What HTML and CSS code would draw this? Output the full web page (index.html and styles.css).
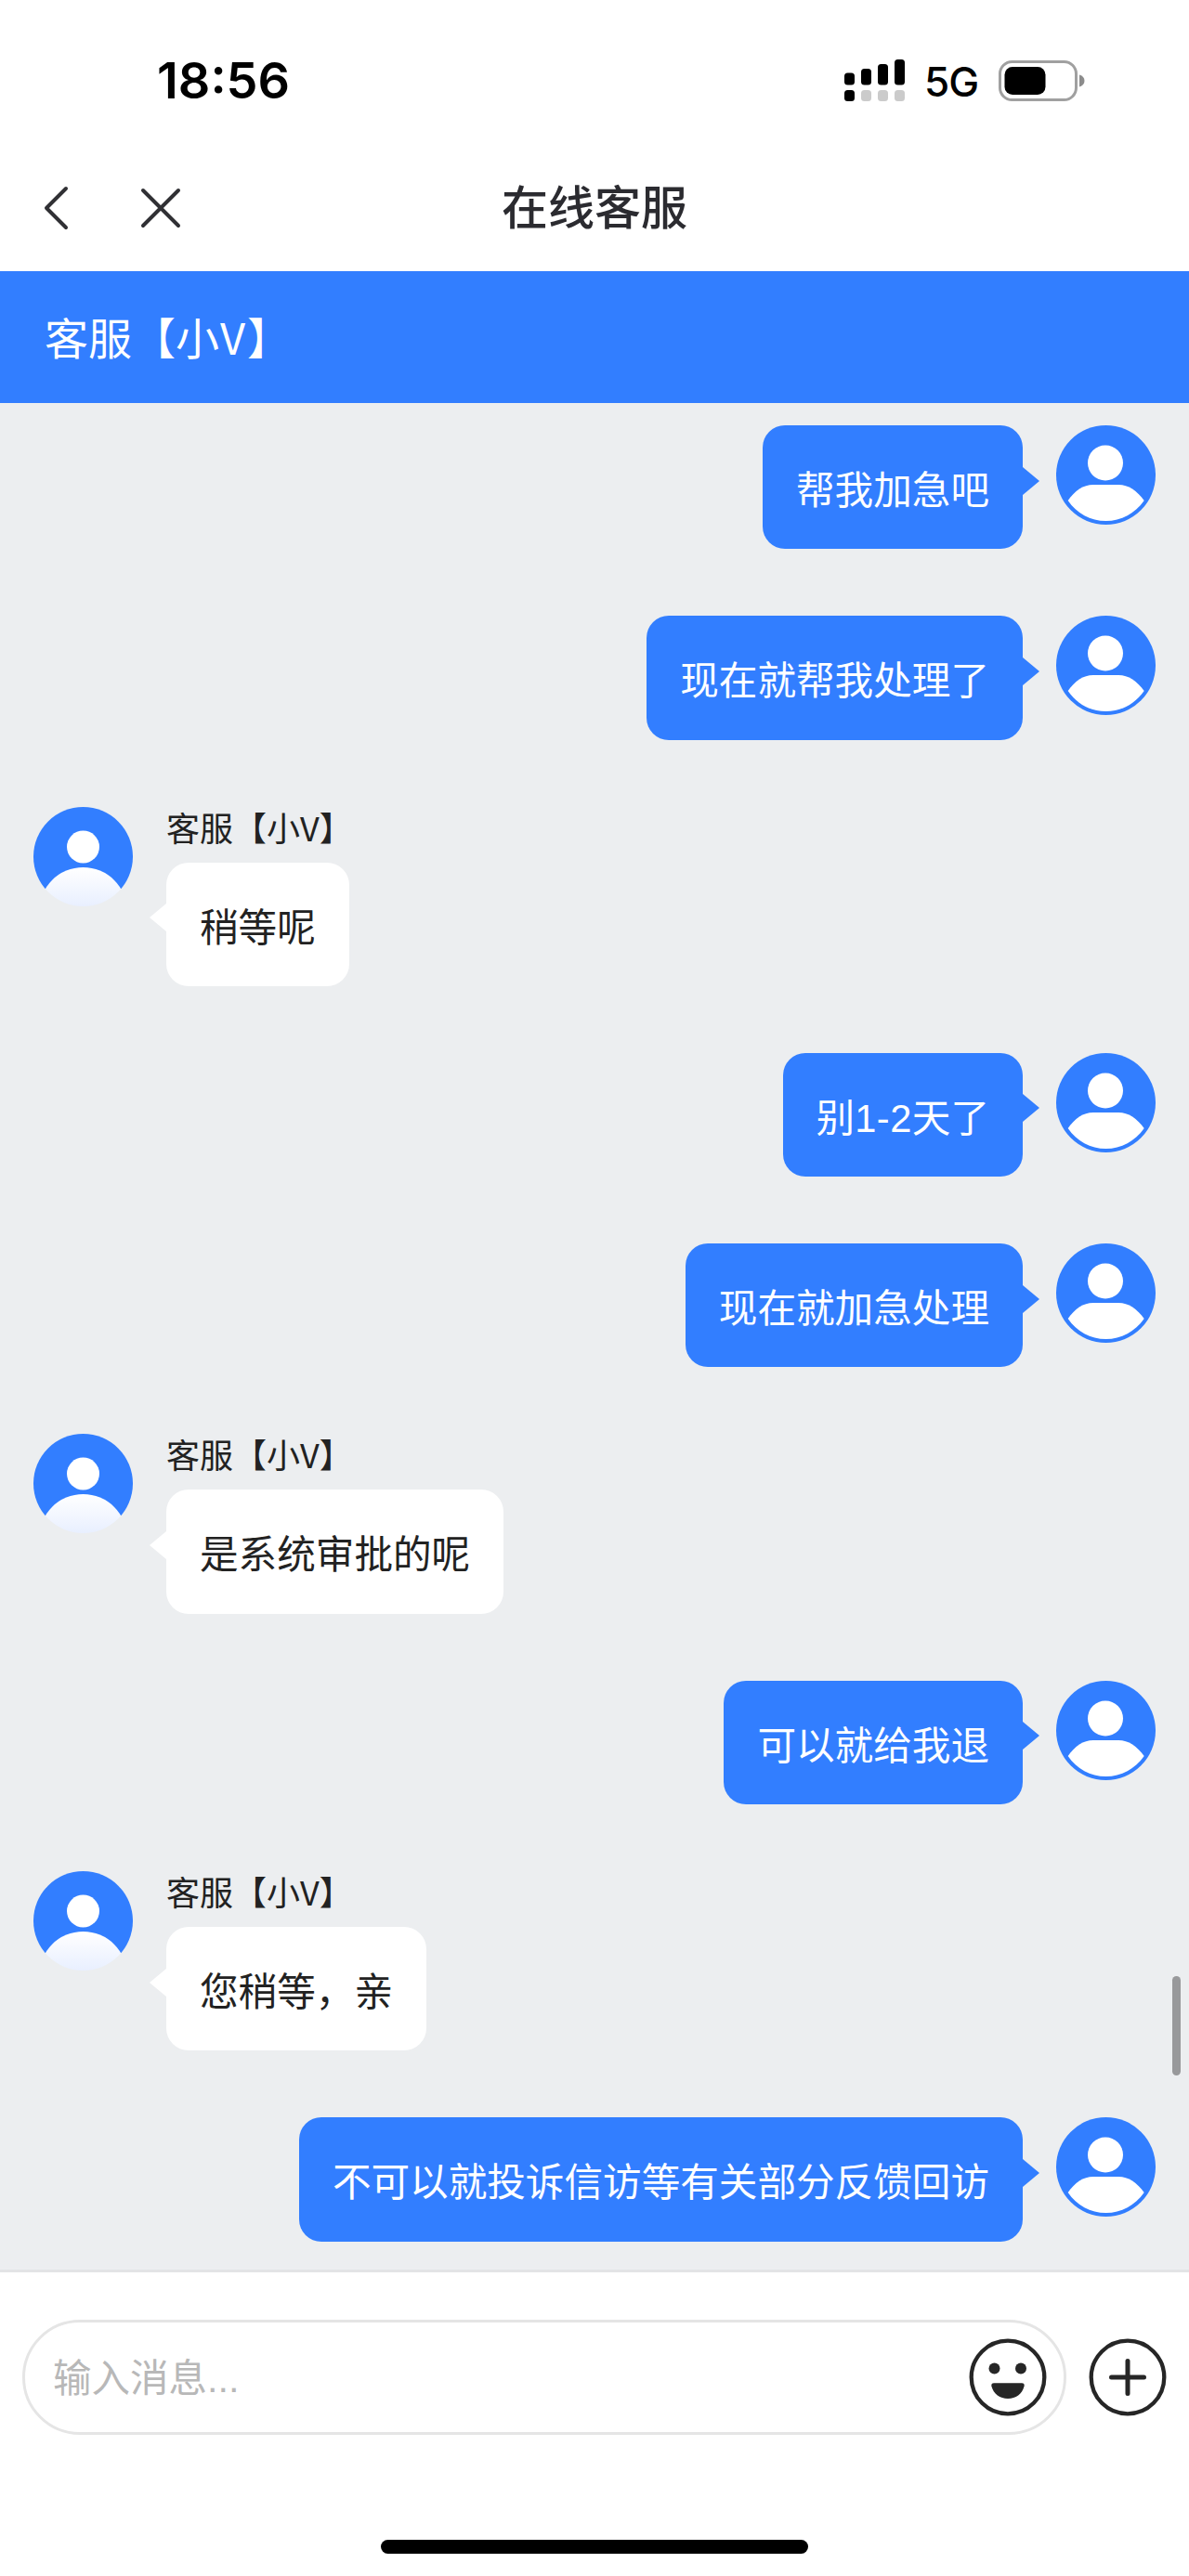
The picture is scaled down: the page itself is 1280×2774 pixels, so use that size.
FILE: index.html
```html
<!DOCTYPE html>
<html lang="zh-CN">
<head>
    <meta charset="UTF-8">
    <meta name="viewport" content="width=device-width, initial-scale=1.0">
    <title>在线客服</title>
    <link rel="stylesheet" href="styles.css">
</head>
<body>
    <!-- Shared icons -->
    <svg class="icon-defs" width="0" height="0">
        <defs>
            <linearGradient id="bodyFade" x1="0" y1="0" x2="0" y2="1">
                <stop offset="0" stop-color="#ffffff"/>
                <stop offset="0.45" stop-color="#e8efff"/>
            </linearGradient>
            <clipPath id="avatarClip"><circle cx="53.5" cy="53.5" r="53.5"/></clipPath>
        </defs>
        <symbol id="user-avatar" viewBox="0 0 107 107">
            <circle cx="53.5" cy="53.5" r="53.5" fill="#327eff"/>
            <circle cx="53" cy="40.5" r="19" fill="#fff"/>
            <path d="M12.7 81C20 70.5 29 64 40 64H67C78 64 87 70.5 94.7 81C85 95 70 103 53.5 103S22 95 12.7 81Z" fill="#fff"/>
        </symbol>
        <symbol id="agent-avatar" viewBox="0 0 107 107">
            <g clip-path="url(#avatarClip)">
                <rect width="107" height="88" fill="#327eff"/>
                <circle cx="53.5" cy="43" r="17.5" fill="#fff"/>
                <circle cx="53.5" cy="112.5" r="47.5" fill="url(#bodyFade)"/>
            </g>
        </symbol>
    </svg>

    <div class="page">
        <div class="status-bar">
            <span class="time">18:56</span>
            <div class="status-right">
                <svg class="signal" width="66" height="46" viewBox="0 0 66 46">
                    <rect x="0" y="14.5" width="11" height="13" rx="3.5"/>
                    <rect x="18" y="10" width="11" height="17.5" rx="3.5"/>
                    <rect x="36" y="5" width="11" height="22.5" rx="3.5"/>
                    <rect x="54" y="0" width="11" height="27.5" rx="3.5"/>
                    <rect x="0" y="33" width="11" height="12" rx="3.5"/>
                    <g fill="#cbcbcb">
                        <rect x="18" y="33" width="11" height="12" rx="3.5"/>
                        <rect x="36" y="33" width="11" height="12" rx="3.5"/>
                        <rect x="54" y="33" width="11" height="12" rx="3.5"/>
                    </g>
                </svg>
                <span class="network">5G</span>
                <svg class="battery" width="94" height="44" viewBox="0 0 94 44">
                    <rect x="1.5" y="1.5" width="82" height="41" rx="13" fill="none" stroke="#a0a0a0" stroke-width="3"/>
                    <rect x="6.5" y="7" width="44" height="30" rx="8.5"/>
                    <path d="M87 15.5C90.5 16.5 92.5 19 92.5 22S90.5 27.5 87 28.5Z" fill="#8c8c8c"/>
                </svg>
            </div>
        </div>

        <div class="nav-bar">
            <svg width="28" height="48" viewBox="0 0 28 48" class="nav-icon">
                <path d="M24 3L3 24L24 45"/>
            </svg>
            <svg width="46" height="46" viewBox="0 0 46 46" class="nav-icon close">
                <path d="M4 4L42 42M42 4L4 42"/>
            </svg>
            <h1>在线客服</h1>
        </div>

        <div class="chat-header">客服【小<span class="letter">V</span>】</div>

        <div class="chat">
            <div class="message user">
                <div class="bubble">帮我加急吧</div>
                <svg class="avatar"><use href="#user-avatar"/></svg>
            </div>
            <div class="message user">
                <div class="bubble">现在就帮我处理了</div>
                <svg class="avatar"><use href="#user-avatar"/></svg>
            </div>
            <div class="message agent">
                <svg class="avatar"><use href="#agent-avatar"/></svg>
                <div class="content">
                    <div class="name">客服【小V】</div>
                    <div class="bubble">稍等呢</div>
                </div>
            </div>
            <div class="message user">
                <div class="bubble">别<span class="num">1-2</span>天了</div>
                <svg class="avatar"><use href="#user-avatar"/></svg>
            </div>
            <div class="message user">
                <div class="bubble">现在就加急处理</div>
                <svg class="avatar"><use href="#user-avatar"/></svg>
            </div>
            <div class="message agent">
                <svg class="avatar"><use href="#agent-avatar"/></svg>
                <div class="content">
                    <div class="name">客服【小V】</div>
                    <div class="bubble">是系统审批的呢</div>
                </div>
            </div>
            <div class="message user">
                <div class="bubble">可以就给我退</div>
                <svg class="avatar"><use href="#user-avatar"/></svg>
            </div>
            <div class="message agent">
                <svg class="avatar"><use href="#agent-avatar"/></svg>
                <div class="content">
                    <div class="name">客服【小V】</div>
                    <div class="bubble">您稍等，亲</div>
                </div>
            </div>
            <div class="message user">
                <div class="bubble">不可以就投诉信访等有关部分反馈回访</div>
                <svg class="avatar"><use href="#user-avatar"/></svg>
            </div>
            <div class="scrollbar"></div>
        </div>

        <div class="footer">
            <div class="input-row">
                <div class="input-box">
                    <span class="placeholder">输入消息...</span>
                    <svg width="84" height="84" viewBox="0 0 84 84">
                        <circle cx="42" cy="42" r="39.3" fill="none" stroke="#262626" stroke-width="4.3"/>
                        <circle cx="27.5" cy="32.5" r="6" fill="#262626"/>
                        <circle cx="56" cy="32.5" r="6" fill="#262626"/>
                        <path d="M27 48.3H57C59 48.3 60 49.5 59.6 51.5C57.5 60 50.5 65 42 65S26.5 60 24.4 51.5C24 49.5 25 48.3 27 48.3Z" fill="#262626"/>
                    </svg>
                </div>
                <svg width="84" height="84" viewBox="0 0 84 84">
                    <g fill="none" stroke="#262626">
                        <circle cx="42" cy="42" r="39.3" stroke-width="4.3"/>
                        <path d="M42 24.500V59.500M24.500 42H59.500" stroke-width="5" stroke-linecap="round"/>
                    </g>
                </svg>
            </div>
            <div class="home-indicator"></div>
        </div>
    </div>
</body>
</html>
```
FILE: styles.css
```css
* { box-sizing: border-box; margin: 0; padding: 0; }
body {
    font-family: "Noto Sans CJK SC", sans-serif;
    background-color: #fff;
    color: #222;
}
svg { display: block; flex-shrink: 0; }
.icon-defs { position: absolute; }
.page {
    width: 1280px;
    height: 2774px;
    display: flex;
    flex-direction: column;
    overflow: hidden;
}

/* Status bar */
.status-bar {
    height: 157px;
    padding: 16px 111px 0 169px;
    display: flex;
    justify-content: space-between;
    align-items: center;
    font-family: Inter, sans-serif;
    color: #000;
}
.time {
    font-size: 54px;
    font-weight: 600;
    letter-spacing: 0;
}
.status-right { display: flex; align-items: center; }
.network {
    margin: 3px 0 0 20px;
    width: 80px;
    font-size: 44px;
    font-weight: 500;
    letter-spacing: -1px;
}

/* Navigation */
.nav-bar {
    height: 135px;
    padding: 0 0 2px 47px;
    display: flex;
    align-items: center;
}
.nav-icon {
    fill: none;
    stroke: #303034;
    stroke-width: 4;
    stroke-linecap: round;
    stroke-linejoin: round;
}
.close { margin-left: 75px; }
.nav-bar h1 {
    margin-left: 344px;
    padding-bottom: 8px;
    font-size: 50px;
    font-weight: 500;
    color: #2b2b30;
}
.chat-header {
    height: 142px;
    padding-left: 48px;
    line-height: 139px;
    font-size: 47px;
    background-color: #327eff;
    color: #fff;
}
.letter { margin: 0 2px 0 1px; }

/* Messages */
.chat {
    position: relative;
    height: 2010px;
    padding: 24px 36px 0;
    display: flex;
    flex-direction: column;
    gap: 72px;
    background-color: #eceef0;
}
.message {
    display: flex;
    align-items: flex-start;
    gap: 36px;
}
.user { justify-content: flex-end; }
.avatar { width: 107px; height: 107px; }
.content {
    display: flex;
    flex-direction: column;
    align-items: flex-start;
}
.name {
    height: 60px;
    line-height: 43px;
    font-size: 36px;
}
.bubble {
    position: relative;
    height: 133.3px;
    padding: 0 36px;
    border-radius: 24px;
    line-height: 134px;
    font-size: 41.6px;
    white-space: nowrap;
    background-color: #fff;
}
.user .bubble { background-color: #327eff; color: #fff; }
/* Bubble arrows */
.bubble::after {
    content: "";
    position: absolute;
    top: 44.5px;
    border: 15px solid transparent;
}
.user .bubble::after {
    left: 100%;
    border-width: 15px 0 15px 18px;
    border-left-color: #327eff;
}
.agent .bubble::after {
    right: 100%;
    border-width: 15px 18px 15px 0;
    border-right-color: #fff;
}
.num {
    font-family: "Liberation Sans", sans-serif;
    letter-spacing: 0.5px;
}
.scrollbar {
    position: absolute;
    right: 9px;
    top: 1694px;
    width: 9px;
    height: 107px;
    border-radius: 5px;
    background-color: #98999b;
}

/* Input area */
.footer {
    height: 330px;
    padding: 51px 24px 0;
    border-top: 3px solid #e3e4e6;
    display: flex;
    flex-direction: column;
    align-items: center;
}
.input-row {
    width: 100%;
    display: flex;
    align-items: center;
    gap: 24px;
}
.input-box {
    flex: 1;
    height: 124px;
    padding: 0 18px 0 30px;
    display: flex;
    align-items: center;
    justify-content: space-between;
    border: 3px solid #e5e5e5;
    border-radius: 62px;
}
.placeholder {
    padding-bottom: 4px;
    font-family: "Liberation Sans", "Noto Sans CJK SC", sans-serif;
    font-size: 41.5px;
    color: #b8b8b8;
}
.home-indicator {
    margin-top: 113px;
    width: 460px;
    height: 15px;
    border-radius: 8px;
    background-color: #000;
}
```
